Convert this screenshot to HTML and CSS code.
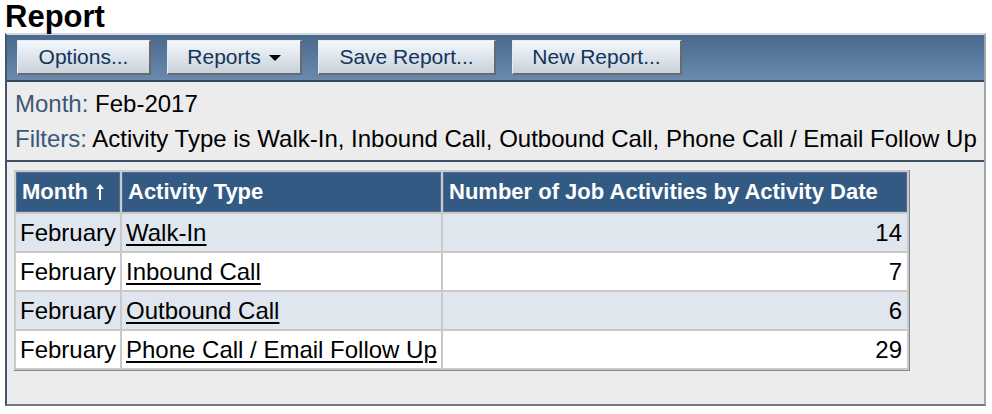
FILE: index.html
```html
<!DOCTYPE html>
<html lang="en">
<head>
    <meta charset="UTF-8">
    <meta name="viewport" content="width=device-width, initial-scale=1.0">
    <title>Report</title>
    <link rel="stylesheet" href="styles.css">
</head>
<body>

    <h1 class="page-title">Report</h1>

    <div class="report-panel">
        <div class="toolbar">
            <button class="tool-btn btn-options">Options...</button>
            <button class="tool-btn btn-reports">Reports <span class="caret"></span></button>
            <button class="tool-btn btn-save">Save Report...</button>
            <button class="tool-btn btn-new">New Report...</button>
        </div>

        <div class="report-info">
            <div class="info-line"><span class="info-label">Month:</span> Feb-2017</div>
            <div class="info-line"><span class="info-label">Filters:</span> Activity Type is Walk-In, Inbound Call, Outbound Call, Phone Call / Email Follow Up</div>
        </div>

        <div class="report-body">
            <table class="report-table">
                <colgroup>
                    <col class="col-month">
                    <col class="col-type">
                    <col class="col-count">
                </colgroup>
                <thead>
                    <tr>
                        <th>Month <svg class="sort-arrow" width="10" height="18" viewBox="0 0 10 18"><path d="M5 17V4" stroke="#fff" stroke-width="2"/><path d="M1 6L5 1L9 6Z" fill="#fff"/></svg></th>
                        <th>Activity Type</th>
                        <th>Number of Job Activities by Activity Date</th>
                    </tr>
                </thead>
                <tbody>
                    <tr>
                        <td>February</td>
                        <td><a href="#">Walk-In</a></td>
                        <td class="num">14</td>
                    </tr>
                    <tr>
                        <td>February</td>
                        <td><a href="#">Inbound Call</a></td>
                        <td class="num">7</td>
                    </tr>
                    <tr>
                        <td>February</td>
                        <td><a href="#">Outbound Call</a></td>
                        <td class="num">6</td>
                    </tr>
                    <tr>
                        <td>February</td>
                        <td><a href="#">Phone Call / Email Follow Up</a></td>
                        <td class="num">29</td>
                    </tr>
                </tbody>
            </table>
        </div>
    </div>

</body>
</html>
```

FILE: styles.css
```css
* {
    box-sizing: border-box;
}

body {
    margin: 0;
    padding: 0 0 0 5px;
    font-family: "Liberation Sans", Arial, Helvetica, sans-serif;
    background-color: #fff;
    color: #000;
}

.page-title {
    margin: 0;
    font-size: 31px;
    line-height: 33px;
    height: 33px;
    font-weight: bold;
}

.report-panel {
    width: 981px;
    border-top: 2px solid #d3d8de;
    border-left: 2px solid #44566b;
    border-right: 2px solid #a0a6ad;
    border-bottom: 2px solid #707980;
    background-color: #ececec;
}

.toolbar {
    display: flex;
    gap: 16px;
    height: 47px;
    padding: 5px 0 0 10px;
    background: linear-gradient(to bottom, #4a698c, #6989ae);
    border-bottom: 2px solid #34485d;
}

.tool-btn {
    height: 35px;
    padding: 0;
    font-family: inherit;
    font-size: 21px;
    color: #12345a;
    background: linear-gradient(to bottom, #f3f7fb, #c8d2dc);
    border-top: 1px solid #e6ecf2;
    border-left: 1px solid #e6ecf2;
    border-right: 2px solid #6a6a6a;
    border-bottom: 2px solid #6a6a6a;
    cursor: pointer;
}

.btn-options { width: 134px; }
.btn-reports { width: 135px; }
.btn-save { width: 178px; }
.btn-new { width: 170px; }

.caret {
    display: inline-block;
    width: 0;
    height: 0;
    margin-left: 2px;
    vertical-align: middle;
    border-left: 6px solid transparent;
    border-right: 6px solid transparent;
    border-top: 6px solid #000;
}

.report-info {
    padding: 4px 0 4px 8px;
    border-bottom: 2px solid #3c4e63;
    font-size: 24px;
    line-height: 35px;
    white-space: nowrap;
}

.info-label {
    color: #3b5878;
}

.report-body {
    padding: 8px 0 33px 7px;
}

.report-table {
    table-layout: fixed;
    width: 896px;
    border-collapse: separate;
    border-spacing: 2px;
    background-color: #c9c9c9;
    border-right: 1px solid #80878e;
    border-bottom: 1px solid #80878e;
}

.col-month { width: 104px; }
.col-type { width: 319px; }
.col-count { width: 464px; }

.report-table th {
    height: 40px;
    padding: 0 5px;
    background-color: #335a83;
    border: 1px solid #4d6e94;
    color: #fff;
    font-size: 22px;
    font-weight: bold;
    text-align: left;
    white-space: nowrap;
}

.sort-arrow {
    vertical-align: -2px;
    margin-left: 1px;
}

.report-table td {
    height: 37px;
    padding: 1px 4px 0 4px;
    font-size: 24px;
    white-space: nowrap;
    background-color: #fff;
}

.report-table tbody tr:nth-child(odd) td {
    background-color: #dfe6ee;
}

.report-table td.num {
    text-align: right;
    padding-right: 5px;
}

.report-table a {
    color: #000;
    text-decoration: underline;
    text-decoration-thickness: 2px;
    text-underline-offset: 3px;
}
```
